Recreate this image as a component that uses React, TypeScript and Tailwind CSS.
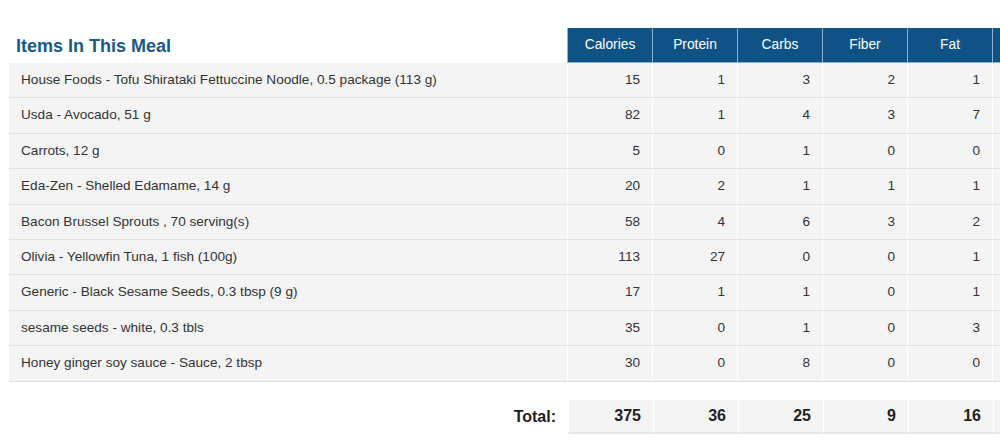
const cols = ['Calories', 'Protein', 'Carbs', 'Fiber', 'Fat'];

const items: [string, number[]][] = [
  ['House Foods - Tofu Shirataki Fettuccine Noodle, 0.5 package (113 g)', [15, 1, 3, 2, 1]],
  ['Usda - Avocado, 51 g', [82, 1, 4, 3, 7]],
  ['Carrots, 12 g', [5, 0, 1, 0, 0]],
  ['Eda-Zen - Shelled Edamame, 14 g', [20, 2, 1, 1, 1]],
  ['Bacon Brussel Sprouts , 70 serving(s)', [58, 4, 6, 3, 2]],
  ['Olivia - Yellowfin Tuna, 1 fish (100g)', [113, 27, 0, 0, 1]],
  ['Generic - Black Sesame Seeds, 0.3 tbsp (9 g)', [17, 1, 1, 0, 1]],
  ['sesame seeds - white, 0.3 tbls', [35, 0, 1, 0, 3]],
  ['Honey ginger soy sauce - Sauce, 2 tbsp', [30, 0, 8, 0, 0]],
];

const totals = [375, 36, 25, 9, 16];

export default function App() {
  return (
    <div className="w-[1000px] h-[442px] overflow-hidden bg-white pt-[28px] pl-[9px] font-['Liberation_Sans',Arial,sans-serif] text-[13.6px] text-[#333]">
      <div className="w-[1200px]">
        {/* header */}
        <div className="flex h-[35px]">
          <div className="w-[558px] flex items-center pl-[7px] pt-[1px]">
            <h2 className="text-[18px] font-bold text-[#17598d]">Items In This Meal</h2>
          </div>
          {cols.map((c) => (
            <div
              key={c}
              className="w-[85px] flex items-center justify-center bg-[#0f5386] text-white text-[13.8px] border-l border-b border-[#8fb2cf]"
            >
              {c}
            </div>
          ))}
          <div className="w-[85px] bg-[#0f5386] border-l border-b border-[#8fb2cf]" />
        </div>

        {/* rows */}
        {items.map(([name, vals]) => (
          <div key={name} className="flex h-[35.4px] bg-[#f4f4f4] border-b border-[#e2e2e2]">
            <div className="w-[558px] flex items-center pl-[12px]">{name}</div>
            {vals.map((v, i) => (
              <div key={i} className="w-[85px] flex items-center justify-end pr-[12px] border-l border-white">
                {v}
              </div>
            ))}
            <div className="w-[85px] border-l border-white" />
          </div>
        ))}

        {/* totals */}
        <div className="flex h-[34px] mt-[18px] text-[16px] font-bold text-[#222]">
          <div className="w-[559px] flex items-center justify-end pr-[12px]">Total:</div>
          {totals.map((v, i) => (
            <div
              key={i}
              className="w-[85px] flex items-center justify-end pr-[12px] bg-[#f4f4f4] border-l border-white border-b-2 border-b-[#e6e6e6]"
            >
              {v}
            </div>
          ))}
          <div className="w-[85px] bg-[#f4f4f4] border-l border-white border-b-2 border-b-[#e6e6e6]" />
        </div>
      </div>
    </div>
  );
}
